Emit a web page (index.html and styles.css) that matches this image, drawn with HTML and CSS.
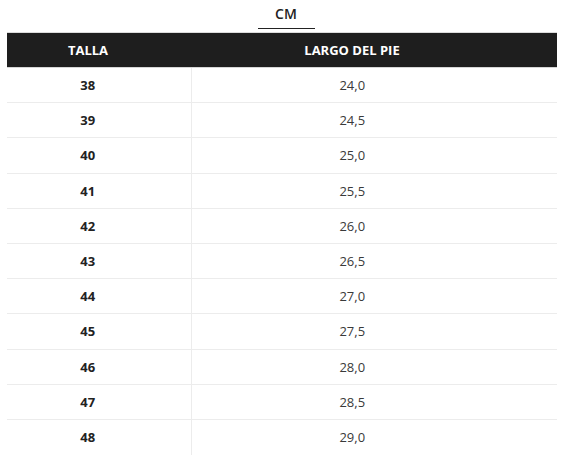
FILE: index.html
```html
<!DOCTYPE html>
<html lang="es">
<head>
<meta charset="utf-8">
<title>Guía de tallas</title>
<link rel="stylesheet" href="styles.css">
</head>
<body>
<div class="tabs"><span class="tab">CM</span></div>
<table class="sizes">
  <thead>
    <tr><th class="c1">TALLA</th><th class="c2">LARGO DEL PIE</th></tr>
  </thead>
  <tbody>
    <tr><td class="c1">38</td><td class="c2">24,0</td></tr>
    <tr><td class="c1">39</td><td class="c2">24,5</td></tr>
    <tr><td class="c1">40</td><td class="c2">25,0</td></tr>
    <tr><td class="c1">41</td><td class="c2">25,5</td></tr>
    <tr><td class="c1">42</td><td class="c2">26,0</td></tr>
    <tr><td class="c1">43</td><td class="c2">26,5</td></tr>
    <tr><td class="c1">44</td><td class="c2">27,0</td></tr>
    <tr><td class="c1">45</td><td class="c2">27,5</td></tr>
    <tr><td class="c1">46</td><td class="c2">28,0</td></tr>
    <tr><td class="c1">47</td><td class="c2">28,5</td></tr>
    <tr class="last"><td class="c1">48</td><td class="c2">29,0</td></tr>
  </tbody>
</table>
</body>
</html>
```

FILE: styles.css
```css
html, body {
  margin: 0;
  padding: 0;
  background: #ffffff;
}
body {
  padding: 0 6px 0 7px;
  font-family: "Open Sans", "Noto Sans", sans-serif;
  color: #333333;
}
.tabs {
  height: 32px;
  display: flex;
  justify-content: center;
  padding-left: 8px;
  box-sizing: border-box;
}
.tab {
  width: 57px;
  height: 29px;
  box-sizing: border-box;
  padding-top: 4px;
  text-align: center;
  font-size: 14px;
  line-height: 20px;
  font-weight: 600;
  color: #222222;
  border-bottom: 1px solid #222222;
}
.sizes {
  width: 100%;
  border-collapse: collapse;
  table-layout: fixed;
}
.sizes thead tr {
  border-top: 1px solid #dcdcdc;
}
.sizes th {
  height: 35px;
  padding: 0;
  background: #1e1e1e;
  color: #ffffff;
  font-size: 13px;
  font-weight: 700;
  text-align: center;
  border-bottom: 1px solid #d6d6d6;
  box-sizing: border-box;
}
.sizes td {
  height: 35.2px;
  padding: 0;
  font-size: 13px;
  text-align: center;
  border-bottom: 1px solid #ececec;
  box-sizing: border-box;
}
.sizes .last td {
  border-bottom: none;
}
.c1 {
  width: 184px;
  padding-right: 22px !important;
}
.sizes td.c1 {
  font-weight: 700;
  color: #222222;
  border-right: 1px solid #ececec;
}
.c2 {
  padding-right: 44px !important;
}
.sizes td.c2 {
  font-weight: 400;
  color: #3a3a3a;
}
```
